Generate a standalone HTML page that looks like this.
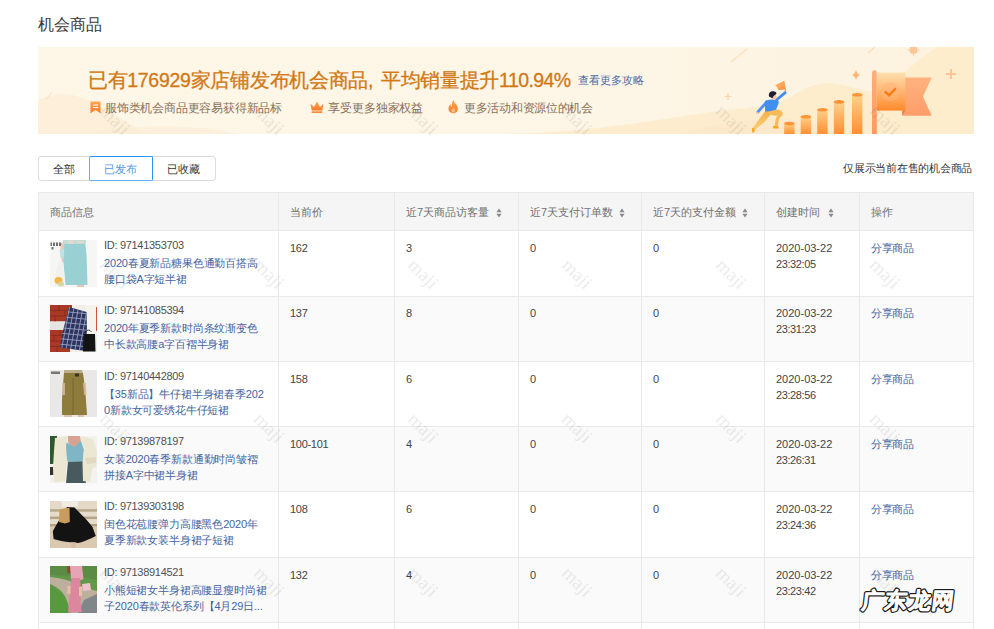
<!DOCTYPE html><html><head><meta charset="utf-8"><style>
*{margin:0;padding:0;box-sizing:border-box}
html,body{width:994px;height:629px;overflow:hidden;background:#fff;font-family:"Liberation Sans",sans-serif;color:#333}
.t{position:absolute;white-space:nowrap}
.r{position:absolute}
</style></head><body>
<div class="t" style="left:37.5px;top:14px;font-size:16px;line-height:22px;color:#383838;letter-spacing:0.3px">机会商品</div>
<svg class="r" style="left:38px;top:47px" width="936" height="87" viewBox="0 0 936 87"><defs><linearGradient id="bg" x1="0" y1="0" x2="1" y2="0"><stop offset="0" stop-color="#fef6e6"/><stop offset="0.6" stop-color="#fdf5e6"/><stop offset="1" stop-color="#fdf2df"/></linearGradient><linearGradient id="bar" x1="0" y1="0" x2="0" y2="1"><stop offset="0" stop-color="#ffd08a"/><stop offset="1" stop-color="#ff8f33"/></linearGradient><linearGradient id="flag" x1="0" y1="0" x2="0" y2="1"><stop offset="0" stop-color="#fee0b0"/><stop offset="0.55" stop-color="#ffb169"/><stop offset="1" stop-color="#ff8a2c"/></linearGradient><linearGradient id="tail" x1="0" y1="0" x2="0" y2="1"><stop offset="0" stop-color="#ffb27e"/><stop offset="1" stop-color="#ff9e6a"/></linearGradient><linearGradient id="pole" x1="0" y1="0" x2="0" y2="1"><stop offset="0" stop-color="#ffae7a"/><stop offset="1" stop-color="#ff9a5e"/></linearGradient><linearGradient id="legs" x1="0" y1="0" x2="0" y2="1"><stop offset="0" stop-color="#f6ad45"/><stop offset="1" stop-color="#fbd07c"/></linearGradient><linearGradient id="pf" x1="0" y1="0" x2="1" y2="1"><stop offset="0" stop-color="#ffc27a"/><stop offset="1" stop-color="#ff8a3a"/></linearGradient></defs><rect width="936" height="87" fill="url(#bg)"/><path d="M0 53 C10 49 22 46 34 48 C60 54 80 72 110 87 L0 87Z" fill="#fcebd0" opacity="0.6"/><path d="M40 87 C90 78 150 76 200 87Z" fill="#fbebd3" opacity="0.5"/><path d="M470 87 C580 84 650 66 700 62 C728 59 745 55 758 47 C770 40 779 36 789 36 C806 36 822 45 840 45 C856 40 872 16 900 0 L936 0 L936 87Z" fill="#fdeccb" opacity="0.9"/><path d="M640 87 C670 78 700 74 730 72 C760 70 790 80 800 87Z" fill="#fbe6c8" opacity="0.5"/><path d="M693 15 L709 2" stroke="#fbe2c0" stroke-width="1.5"/><path d="M830 6 L837 0" stroke="#f8d2a8" stroke-width="1"/><path d="M8 53 L14 45" stroke="#fbe0c0" stroke-width="1"/><path d="M818 23 Q819 27 822 28 Q819 29 818 33 Q817 29 814 28 Q817 27 818 23Z" fill="#fbb77a"/><path d="M913 22 V32 M908 27 H918" stroke="#fcc497" stroke-width="2"/><path d="M690 46 V53 M686.5 49.5 H693.5" stroke="#fcd3ab" stroke-width="1.2"/><circle cx="875.5" cy="3" r="4" fill="#fdc696"/><path d="M875.5 -3 V9 M869.5 3 H881.5" stroke="#fdc696" stroke-width="0.8"/><rect x="746.2" y="76.6" width="10.4" height="10.400000000000006" fill="url(#bar)"/><ellipse cx="751.4000000000001" cy="76.6" rx="5.2" ry="1.8" fill="#ff9536"/><rect x="762.7" y="69.8" width="10.4" height="17.200000000000003" fill="url(#bar)"/><ellipse cx="767.9000000000001" cy="69.8" rx="5.2" ry="1.8" fill="#ff9536"/><rect x="779.2" y="62.7" width="10.4" height="24.299999999999997" fill="url(#bar)"/><ellipse cx="784.4000000000001" cy="62.7" rx="5.2" ry="1.8" fill="#ff9536"/><rect x="795.8" y="54.9" width="10.4" height="32.1" fill="url(#bar)"/><ellipse cx="801.0" cy="54.9" rx="5.2" ry="1.8" fill="#ff9536"/><rect x="814" y="47.8" width="10.4" height="39.2" fill="url(#bar)"/><ellipse cx="819.2" cy="47.8" rx="5.2" ry="1.8" fill="#ff9536"/><path d="M834 25.7 A2.4 2.4 0 0 1 838.8 25.7 V87 H834Z" fill="url(#pole)"/><path d="M864.4 30.4 H893.7 L885 49.5 L893.7 68.7 H864.4Z" fill="url(#tail)"/><path d="M864.4 63.6 L867.4 63.6 L864.4 68.7Z" fill="#f07a30"/><rect x="838.8" y="25.5" width="28.6" height="38.1" fill="url(#flag)"/><circle cx="852" cy="44.6" r="9.3" fill="#ffb57a" opacity="0.55"/><path d="M846.8 44.3 L851 48.3 L857.8 41.2" stroke="#ff7a0a" stroke-width="2.3" fill="none"/><path d="M728 63 L736.5 63 L726.5 75 L716.8 83 L714.3 81.5 L721 72.5Z" fill="url(#legs)"/><path d="M730.5 62.3 L738 62.3 C741.5 63 744.5 64 744.8 66.2 C744.8 68 743 70 741.2 71.5 L739.6 79.5 L736.4 79.5 L737.9 71 L739.3 68.6 C736 68.8 733 68.3 730.5 67.2Z" fill="#f8bb5a"/><path d="M735.2 79 L740 79 L741 81.6 L735.2 81.6Z" fill="#f6a524"/><path d="M714 80.8 L716.9 81.8 L716.2 85.6 L714.2 85.6Z" fill="#f6a524"/><path d="M737.8 53.5 L747.2 45.6" stroke="#3f8ef0" stroke-width="2.8" stroke-linecap="round"/><path d="M728.6 55 L719.9 65" stroke="#4996f4" stroke-width="2.8" stroke-linecap="round"/><path d="M727.5 53.6 C730 52.6 735 52.2 738 52.5 C740.5 53 741.2 54.5 740.5 56.5 L738 62.8 C734.5 63.8 731 64.5 727.3 64.8 C726.8 61 726.8 57 727.5 53.6Z" fill="#3f8ef0"/><circle cx="719.4" cy="66" r="1.2" fill="#f8c6a8"/><circle cx="736" cy="50.2" r="2.6" fill="#f7c5ad"/><path d="M731 49.6 C730.3 46 732.3 44.1 735.3 44.3 C738.2 44.5 739.2 46.5 737.8 47.6 C736.4 48.3 735.3 48.8 734.4 51.3 Z" fill="#1e1e2e"/><path d="M747.7 45 L745.6 34" stroke="#f08030" stroke-width="0.9"/><path d="M737.3 38.3 C740 36.5 743 35.5 746.2 33.7 L747.2 42.3 C745 42.6 742.8 43 740.6 43.3 C740 41.5 738.8 39.8 737.3 38.3Z" fill="url(#pf)"/></svg>
<div class="t" style="left:87.8px;top:66px;font-size:19.5px;line-height:28px;color:#d27814;letter-spacing:-0.28px;-webkit-text-stroke:0.3px #d27814">已有176929家店铺发布机会商品<span style="margin-right:2.4px">, </span>平均销量提升<span style="letter-spacing:-0.6px">110.94%</span></div>
<div class="t" style="left:578px;top:72px;font-size:11px;line-height:16px;color:#4a6ca6;">查看更多攻略</div>
<div class="t" style="left:105px;top:100px;font-size:12px;line-height:16px;color:#8a7058;letter-spacing:-0.2px">服饰类机会商品更容易获得新品标</div>
<div class="t" style="left:328px;top:100px;font-size:12px;line-height:16px;color:#8a7058;letter-spacing:-0.1px">享受更多独家权益</div>
<div class="t" style="left:464px;top:100px;font-size:12px;line-height:16px;color:#8a7058;letter-spacing:-0.3px">更多活动和资源位的机会</div>
<svg class="r" style="left:89px;top:100px" width="13" height="14" viewBox="0 0 13 14"><defs><linearGradient id="ic" x1="0" y1="0" x2="0" y2="1"><stop offset="0" stop-color="#ffa552"/><stop offset="1" stop-color="#ff7a28"/></linearGradient></defs><path d="M1.5 1.5 H11.5 V13.2 L6.5 10 L1.5 13.2Z" fill="url(#ic)"/><path d="M4 5 H9 M4 7.5 H9" stroke="#fff" stroke-width="1.1"/></svg>
<svg class="r" style="left:309px;top:100px" width="16" height="14" viewBox="0 0 16 14"><path d="M1.5 3.5 L5 7 L8 1.5 L11 7 L14.5 3.5 L13.3 10.5 H2.7Z" fill="url(#ic)"/><rect x="2.7" y="11.3" width="10.6" height="1.7" fill="#ff8a36"/></svg>
<svg class="r" style="left:447px;top:99px" width="13" height="15" viewBox="0 0 13 15"><path d="M6.2 1 C7 4 10.5 5.5 10.8 9.2 C11 12.3 8.8 14.2 6.2 14.2 C3.3 14.2 1.3 12.2 1.5 9.3 C1.6 7.3 2.8 6 3.5 5.2 C3.6 6.8 4.2 7.5 4.9 7.8 C4.6 5 5.5 2.6 6.2 1Z" fill="url(#ic)"/><path d="M6.3 8.5 C7.3 9.8 8.3 10.6 8.2 12 C8.1 13 7.3 13.6 6.3 13.6 C5.2 13.6 4.4 12.9 4.5 11.8 C4.6 10.6 5.6 9.9 6.3 8.5Z" fill="#ffd08a" opacity="0.8"/></svg>
<div class="r" style="left:38px;top:156px;width:178px;height:25px;border:1px solid #dcdcdc;border-radius:3px;background:#fff"></div>
<div class="r" style="left:152px;top:157px;width:1px;height:23px;background:#dcdcdc"></div>
<div class="r" style="left:89px;top:156px;width:64px;height:25px;border:1px solid #2b92ee;border-left-color:#62b0f3;border-bottom-color:#62b0f3;border-radius:2px"></div>
<div class="t" style="left:53px;top:161px;font-size:11px;line-height:16px;color:#333;">全部</div>
<div class="t" style="left:104px;top:161px;font-size:11px;line-height:16px;color:#5593e6;">已发布</div>
<div class="t" style="left:167px;top:161px;font-size:11px;line-height:16px;color:#333;">已收藏</div>
<div class="t" style="left:843px;top:160px;font-size:11px;line-height:16px;color:#333;letter-spacing:-0.25px">仅展示当前在售的机会商品</div>
<div class="r" style="left:38px;top:192px;width:935px;height:38px;background:#f5f5f5"></div>
<div class="r" style="left:38px;top:296px;width:935px;height:65px;background:#fafafa"></div>
<div class="r" style="left:38px;top:426px;width:935px;height:65px;background:#fafafa"></div>
<div class="r" style="left:38px;top:557px;width:935px;height:65px;background:#fafafa"></div>
<div class="r" style="left:38px;top:622px;width:935px;height:10px;background:#fff"></div>
<div class="r" style="left:38px;top:192px;width:936px;height:1px;background:#e9e9e9"></div>
<div class="r" style="left:38px;top:230px;width:936px;height:1px;background:#e9e9e9"></div>
<div class="r" style="left:38px;top:296px;width:936px;height:1px;background:#e9e9e9"></div>
<div class="r" style="left:38px;top:361px;width:936px;height:1px;background:#e9e9e9"></div>
<div class="r" style="left:38px;top:426px;width:936px;height:1px;background:#e9e9e9"></div>
<div class="r" style="left:38px;top:491px;width:936px;height:1px;background:#e9e9e9"></div>
<div class="r" style="left:38px;top:557px;width:936px;height:1px;background:#e9e9e9"></div>
<div class="r" style="left:38px;top:622px;width:936px;height:1px;background:#e9e9e9"></div>
<div class="r" style="left:38px;top:192px;width:1px;height:437px;background:#e9e9e9"></div>
<div class="r" style="left:278px;top:192px;width:1px;height:437px;background:#e9e9e9"></div>
<div class="r" style="left:394px;top:192px;width:1px;height:437px;background:#e9e9e9"></div>
<div class="r" style="left:518px;top:192px;width:1px;height:437px;background:#e9e9e9"></div>
<div class="r" style="left:641px;top:192px;width:1px;height:437px;background:#e9e9e9"></div>
<div class="r" style="left:764px;top:192px;width:1px;height:437px;background:#e9e9e9"></div>
<div class="r" style="left:859px;top:192px;width:1px;height:437px;background:#e9e9e9"></div>
<div class="r" style="left:973px;top:192px;width:1px;height:437px;background:#e9e9e9"></div>
<div class="t" style="left:50px;top:204px;font-size:11px;line-height:16px;color:#707070;">商品信息</div>
<div class="t" style="left:290px;top:204px;font-size:11px;line-height:16px;color:#707070;">当前价</div>
<div class="t" style="left:406px;top:204px;font-size:11px;line-height:16px;color:#707070;">近7天商品访客量</div>
<svg class="r" style="left:496px;top:208px" width="6" height="10" viewBox="0 0 6 10"><path d="M3 0.5L5.6 4.3H0.4Z M3 9.5L5.6 5.7H0.4Z" fill="#8a8a8a"/></svg>
<div class="t" style="left:530px;top:204px;font-size:11px;line-height:16px;color:#707070;">近7天支付订单数</div>
<svg class="r" style="left:619px;top:208px" width="6" height="10" viewBox="0 0 6 10"><path d="M3 0.5L5.6 4.3H0.4Z M3 9.5L5.6 5.7H0.4Z" fill="#8a8a8a"/></svg>
<div class="t" style="left:653px;top:204px;font-size:11px;line-height:16px;color:#707070;">近7天的支付金额</div>
<svg class="r" style="left:742px;top:208px" width="6" height="10" viewBox="0 0 6 10"><path d="M3 0.5L5.6 4.3H0.4Z M3 9.5L5.6 5.7H0.4Z" fill="#8a8a8a"/></svg>
<div class="t" style="left:776px;top:204px;font-size:11px;line-height:16px;color:#707070;">创建时间</div>
<svg class="r" style="left:828px;top:208px" width="6" height="10" viewBox="0 0 6 10"><path d="M3 0.5L5.6 4.3H0.4Z M3 9.5L5.6 5.7H0.4Z" fill="#8a8a8a"/></svg>
<div class="t" style="left:871px;top:204px;font-size:11px;line-height:16px;color:#707070;">操作</div>
<svg class="r" style="left:50px;top:240px" width="47" height="47" viewBox="0 0 47 47"><rect width="47" height="47" fill="#f6f6f5"/>
<path d="M11 3 L14 2 L16 10 L15 22 L12 22 L10 12Z" fill="#e6c8bd"/>
<path d="M9.5 10 L14.5 9 L15 17 L10.5 18Z" fill="#bfe3e3"/>
<path d="M14 2 L35 1.5 L36.5 14 L37.5 45 L15.5 45 L13.5 23 L14.3 8Z" fill="#98d0d3"/>
<path d="M13 0 L36 0 L36 4 L13 4Z" fill="#c4ddd4"/>
<path d="M18 1 L23 0.5 L24 3.5 L18 3.5Z M27 1 L33 1 L33 3 L27 3Z" fill="#e9d6cf"/>
<path d="M27 45 L34 45 L34 47 L27 47Z" fill="#e9c7b8"/>
<path d="M8 22 L13 22 L15 40 L12 46 L5 46 L5 38Z" fill="#efefec" opacity="0.9"/>
<ellipse cx="8.5" cy="40.5" rx="4" ry="3.5" fill="#f2b74a"/>
<ellipse cx="11" cy="44" rx="3" ry="2.5" fill="#d8d4a0"/>
<path d="M0.5 2.5 H2 V6 H0.5Z M3 2.5 H5 V6 H3Z M6 2.5 H8 V6 H6Z M9 2.5 H11 V6 H9Z M1.5 7 H3.5 V9.5 H1.5Z" fill="#444" opacity="0.75"/></svg>
<div class="t" style="left:104px;top:237px;font-size:11px;line-height:16px;color:#505050;letter-spacing:-0.3px">ID: 97141353703</div>
<div class="t" style="left:104px;top:255px;font-size:11px;line-height:16px;color:#4464a0;letter-spacing:-0.17px">2020春夏新品糖果色通勤百搭高</div>
<div class="t" style="left:104px;top:271px;font-size:11px;line-height:16px;color:#4464a0;letter-spacing:-0.17px">腰口袋A字短半裙</div>
<div class="t" style="left:290px;top:240px;font-size:11px;line-height:16px;color:#444;letter-spacing:-0.3px">162</div>
<div class="t" style="left:406px;top:240px;font-size:11px;line-height:16px;color:#444;letter-spacing:-0.3px">3</div>
<div class="t" style="left:530px;top:240px;font-size:11px;line-height:16px;color:#444;letter-spacing:-0.3px">0</div>
<div class="t" style="left:653px;top:240px;font-size:11px;line-height:16px;color:#444;letter-spacing:-0.3px">0</div>
<div class="t" style="left:776px;top:240px;font-size:11px;line-height:16px;color:#444;">2020-03-22</div>
<div class="t" style="left:776px;top:256px;font-size:11px;line-height:16px;color:#444;letter-spacing:-0.4px">23:32:05</div>
<div class="t" style="left:871px;top:240px;font-size:11px;line-height:16px;color:#4464a0;letter-spacing:-0.3px">分享商品</div>
<svg class="r" style="left:50px;top:305px" width="47" height="47" viewBox="0 0 47 47"><rect width="47" height="47" fill="#f2efea"/>
<rect x="0" y="0" width="22" height="16.5" fill="#a83a24"/>
<rect x="0" y="25" width="20" height="22" fill="#a83a24"/>
<rect x="0" y="16.5" width="20" height="8.5" fill="#e8e6e3"/>
<path d="M0 5.5 H22 M0 11 H22 M0 30.5 H20 M0 36 H20 M0 41.5 H20 M9 0 V5.5 M15 5.5 V11 M5 11 V16.5 M10 25 V30.5 M4 30.5 V36 M13 36 V41.5 M7 41.5 V47" stroke="#7c2a1c" stroke-width="0.9" opacity="0.8"/>
<path d="M45.5 2 L47 2 L47 26 L45.5 26Z" fill="#c9553a"/>
<path d="M36 0 L46 0 L46 28 L38 29 L35 20Z" fill="#f6f2ec"/>
<clipPath id="sk2"><path d="M19 2 L36.5 7 L37 26 L35.5 46 L10 42.5 L11.5 32Z"/></clipPath>
<path d="M19 2 L36.5 7 L37 26 L35.5 46 L10 42.5 L11.5 32Z" fill="#2b3560"/>
<g clip-path="url(#sk2)"><path d="M8 6.0 L40 9.0 M8 11.5 L40 14.5 M8 17.0 L40 20.0 M8 22.5 L40 25.5 M8 28.0 L40 31.0 M8 33.5 L40 36.5 M8 39.0 L40 42.0 M8 44.5 L40 47.5 M20.0 0 L11.0 47 M24.5 0 L15.5 47 M29.0 0 L20.0 47 M33.5 0 L24.5 47 M38.0 0 L29.0 47 M42.5 0 L33.5 47 M47.0 0 L38.0 47" stroke="#9aa2c2" stroke-width="0.9"/></g>
<path d="M35.5 27 Q38.5 23 41.5 27" stroke="#222" stroke-width="0.8" fill="none"/>
<path d="M33.5 29 L45 29 L45.5 46.5 L33 46.5Z" fill="#131313"/></svg>
<div class="t" style="left:104px;top:302px;font-size:11px;line-height:16px;color:#505050;letter-spacing:-0.3px">ID: 97141085394</div>
<div class="t" style="left:104px;top:320px;font-size:11px;line-height:16px;color:#4464a0;letter-spacing:-0.17px">2020年夏季新款时尚条纹渐变色</div>
<div class="t" style="left:104px;top:336px;font-size:11px;line-height:16px;color:#4464a0;letter-spacing:-0.17px">中长款高腰a字百褶半身裙</div>
<div class="t" style="left:290px;top:305px;font-size:11px;line-height:16px;color:#444;letter-spacing:-0.3px">137</div>
<div class="t" style="left:406px;top:305px;font-size:11px;line-height:16px;color:#444;letter-spacing:-0.3px">8</div>
<div class="t" style="left:530px;top:305px;font-size:11px;line-height:16px;color:#444;letter-spacing:-0.3px">0</div>
<div class="t" style="left:653px;top:305px;font-size:11px;line-height:16px;color:#444;letter-spacing:-0.3px">0</div>
<div class="t" style="left:776px;top:305px;font-size:11px;line-height:16px;color:#444;">2020-03-22</div>
<div class="t" style="left:776px;top:321px;font-size:11px;line-height:16px;color:#444;letter-spacing:-0.4px">23:31:23</div>
<div class="t" style="left:871px;top:305px;font-size:11px;line-height:16px;color:#4464a0;letter-spacing:-0.3px">分享商品</div>
<svg class="r" style="left:50px;top:370px" width="47" height="47" viewBox="0 0 47 47"><rect width="47" height="47" fill="#eae8e6"/>
<path d="M14 0 L32 0 L33 4 L14 4Z" fill="#bfae8a"/>
<path d="M14 3 L33 3 L35 18 L36 30 L37 45 L12 45 L12 30 L13 15Z" fill="#8e7c3c"/>
<path d="M12 13 L15 13 L15 25 L12.5 25Z M33 13 L36 13 L36.5 25 L34 25Z" fill="#d8b8a0" opacity="0.85"/>
<path d="M23 8 L23 45" stroke="#6f602c" stroke-width="0.8"/>
<rect x="25" y="3.5" width="4" height="3" fill="#3a3420"/>
<path d="M14 45 L22 45 L22 47 L14 47Z M28 45 L34 45 L34 47 L28 47Z" fill="#dcc3b0"/>
<path d="M1 1.5 H10 V4 H1Z" fill="#444" opacity="0.7"/></svg>
<div class="t" style="left:104px;top:368px;font-size:11px;line-height:16px;color:#505050;letter-spacing:-0.3px">ID: 97140442809</div>
<div class="t" style="left:104px;top:386px;font-size:11px;line-height:16px;color:#4464a0;letter-spacing:-0.17px">【35新品】牛仔裙半身裙春季202</div>
<div class="t" style="left:104px;top:402px;font-size:11px;line-height:16px;color:#4464a0;letter-spacing:-0.17px">0新款女可爱绣花牛仔短裙</div>
<div class="t" style="left:290px;top:371px;font-size:11px;line-height:16px;color:#444;letter-spacing:-0.3px">158</div>
<div class="t" style="left:406px;top:371px;font-size:11px;line-height:16px;color:#444;letter-spacing:-0.3px">6</div>
<div class="t" style="left:530px;top:371px;font-size:11px;line-height:16px;color:#444;letter-spacing:-0.3px">0</div>
<div class="t" style="left:653px;top:371px;font-size:11px;line-height:16px;color:#444;letter-spacing:-0.3px">0</div>
<div class="t" style="left:776px;top:371px;font-size:11px;line-height:16px;color:#444;">2020-03-22</div>
<div class="t" style="left:776px;top:387px;font-size:11px;line-height:16px;color:#444;letter-spacing:-0.4px">23:28:56</div>
<div class="t" style="left:871px;top:371px;font-size:11px;line-height:16px;color:#4464a0;letter-spacing:-0.3px">分享商品</div>
<svg class="r" style="left:50px;top:436px" width="47" height="47" viewBox="0 0 47 47"><rect width="47" height="47" fill="#f3f2ee"/>
<path d="M0 0 L7 0 L7.5 14 L6 26 L3 28 L0 28Z" fill="#2c5a2c"/>
<path d="M0 31 L3.5 31 L3.5 39 L0 39Z" fill="#333"/>
<path d="M18 0 L30 0 L31 6 L28 11 L21 11 L18 6Z" fill="#d8a392"/>
<path d="M16 6 L24 11 L31 5 L34 14 L33 26 L18 27 L15 16Z" fill="#7fb6c6"/>
<path d="M18 26 L33 25.5 L36 47 L16 47Z" fill="#485a5e"/>
<path d="M5 2 L18 0 L16 10 L17 26 L15 45 L4 46.5 L3 32 L4 15Z" fill="#ece7d3"/>
<path d="M30 0 L43 3 L47 15 L46.5 30 L42 33 L40 46 L33 45 L32.5 27 L34 12Z" fill="#ece7d3"/>
<path d="M35 22 L46 21 L46 27 L37 28Z" fill="#e0d9c2"/></svg>
<div class="t" style="left:104px;top:433px;font-size:11px;line-height:16px;color:#505050;letter-spacing:-0.3px">ID: 97139878197</div>
<div class="t" style="left:104px;top:451px;font-size:11px;line-height:16px;color:#4464a0;letter-spacing:-0.17px">女装2020春季新款通勤时尚皱褶</div>
<div class="t" style="left:104px;top:467px;font-size:11px;line-height:16px;color:#4464a0;letter-spacing:-0.17px">拼接A字中裙半身裙</div>
<div class="t" style="left:290px;top:436px;font-size:11px;line-height:16px;color:#444;letter-spacing:-0.3px">100-101</div>
<div class="t" style="left:406px;top:436px;font-size:11px;line-height:16px;color:#444;letter-spacing:-0.3px">4</div>
<div class="t" style="left:530px;top:436px;font-size:11px;line-height:16px;color:#444;letter-spacing:-0.3px">0</div>
<div class="t" style="left:653px;top:436px;font-size:11px;line-height:16px;color:#444;letter-spacing:-0.3px">0</div>
<div class="t" style="left:776px;top:436px;font-size:11px;line-height:16px;color:#444;">2020-03-22</div>
<div class="t" style="left:776px;top:452px;font-size:11px;line-height:16px;color:#444;letter-spacing:-0.4px">23:26:31</div>
<div class="t" style="left:871px;top:436px;font-size:11px;line-height:16px;color:#4464a0;letter-spacing:-0.3px">分享商品</div>
<svg class="r" style="left:50px;top:501px" width="47" height="47" viewBox="0 0 47 47"><rect width="47" height="47" fill="#dccdb5"/>
<rect x="0" y="0" width="47" height="8.5" fill="#e4d9c6"/>
<rect x="0" y="8.2" width="47" height="2.6" fill="#b9a88c"/>
<rect x="0" y="10.8" width="47" height="5" fill="#e6dccb"/>
<rect x="0" y="15.6" width="47" height="2.6" fill="#b5a386"/>
<rect x="0" y="18.2" width="47" height="5" fill="#e6dccb"/>
<rect x="0" y="23" width="47" height="2.6" fill="#b3a084"/>
<rect x="0" y="25.6" width="47" height="21.4" fill="#dac9af"/>
<path d="M11.5 0 L28 0 L28 5.6 L12 6Z" fill="#f0ebe4"/>
<path d="M17 6 L24.5 6.5 C30 12 38 20 42.5 26 L45.8 35 C40 38 33 41 28.2 42 L20.3 41.3 C14 40.5 8 39.5 3.6 38 L2.8 30.2 C6 24 11 16 17 6Z" fill="#131313"/>
<path d="M9.5 8.5 L19.5 6.5 L19.8 21 L15 22.5 L9 21Z" fill="#c99c5c"/>
<path d="M21 41.3 L26 41.3 L25.5 47 L21.5 47Z" fill="#d9b9a4"/></svg>
<div class="t" style="left:104px;top:498px;font-size:11px;line-height:16px;color:#505050;letter-spacing:-0.3px">ID: 97139303198</div>
<div class="t" style="left:104px;top:516px;font-size:11px;line-height:16px;color:#4464a0;letter-spacing:-0.17px">闺色花苞腰弹力高腰黑色2020年</div>
<div class="t" style="left:104px;top:532px;font-size:11px;line-height:16px;color:#4464a0;letter-spacing:-0.17px">夏季新款女装半身裙子短裙</div>
<div class="t" style="left:290px;top:501px;font-size:11px;line-height:16px;color:#444;letter-spacing:-0.3px">108</div>
<div class="t" style="left:406px;top:501px;font-size:11px;line-height:16px;color:#444;letter-spacing:-0.3px">6</div>
<div class="t" style="left:530px;top:501px;font-size:11px;line-height:16px;color:#444;letter-spacing:-0.3px">0</div>
<div class="t" style="left:653px;top:501px;font-size:11px;line-height:16px;color:#444;letter-spacing:-0.3px">0</div>
<div class="t" style="left:776px;top:501px;font-size:11px;line-height:16px;color:#444;">2020-03-22</div>
<div class="t" style="left:776px;top:517px;font-size:11px;line-height:16px;color:#444;letter-spacing:-0.4px">23:24:36</div>
<div class="t" style="left:871px;top:501px;font-size:11px;line-height:16px;color:#4464a0;letter-spacing:-0.3px">分享商品</div>
<svg class="r" style="left:50px;top:566px" width="47" height="47" viewBox="0 0 47 47"><rect width="47" height="47" fill="#62984a"/>
<path d="M0 0 H47 V14 L36 12 L24 10 L0 9Z" fill="#5a8c44"/>
<path d="M0 11 C10 12 20 14 28 19 C36 22 42 24 47 25 L47 34 C42 38 36 42 30 47 L20 47 C19 38 16 30 10 24 C6 21 3 19 0 18Z" fill="#bcb09c"/>
<path d="M34 34 L47 28 L47 47 L28 47Z" fill="#80868a"/>
<path d="M0 19 C5 22 11 26 15 31 C17 36 18 42 18 47 L0 47Z" fill="#579a3e"/>
<path d="M17 0.5 L21 0 L21.5 7 L17.5 7.5Z" fill="#8c4a32"/>
<path d="M20 0 L32 0 L33.5 13 L28 15 L21 13Z" fill="#e6a4b6"/>
<path d="M21.5 12 L30 12 L31 24 L30.5 36 L32 46 L18 46.5 L19 36 L20 24Z" fill="#dc879e"/>
<path d="M32 18 L40 17 L41 24 L33 25Z" fill="#f0c2cf"/>
<path d="M17.5 20 L20.5 20 L20.5 28 L17.5 28Z M29 21 L32 21 L32 30 L29 30Z" fill="#e8bfa8"/></svg>
<div class="t" style="left:104px;top:564px;font-size:11px;line-height:16px;color:#505050;letter-spacing:-0.3px">ID: 97138914521</div>
<div class="t" style="left:104px;top:582px;font-size:11px;line-height:16px;color:#4464a0;letter-spacing:-0.17px">小熊短裙女半身裙高腰显瘦时尚裙</div>
<div class="t" style="left:104px;top:598px;font-size:11px;line-height:16px;color:#4464a0;letter-spacing:-0.17px">子2020春款英伦系列【4月29日...</div>
<div class="t" style="left:290px;top:567px;font-size:11px;line-height:16px;color:#444;letter-spacing:-0.3px">132</div>
<div class="t" style="left:406px;top:567px;font-size:11px;line-height:16px;color:#444;letter-spacing:-0.3px">4</div>
<div class="t" style="left:530px;top:567px;font-size:11px;line-height:16px;color:#444;letter-spacing:-0.3px">0</div>
<div class="t" style="left:653px;top:567px;font-size:11px;line-height:16px;color:#444;letter-spacing:-0.3px">0</div>
<div class="t" style="left:776px;top:567px;font-size:11px;line-height:16px;color:#444;">2020-03-22</div>
<div class="t" style="left:776px;top:583px;font-size:11px;line-height:16px;color:#444;letter-spacing:-0.4px">23:23:42</div>
<div class="t" style="left:871px;top:567px;font-size:11px;line-height:16px;color:#4464a0;letter-spacing:-0.3px">分享商品</div>
<div class="t" style="left:89.5px;top:108.5px;width:50px;height:22px;font-size:19px;line-height:22px;color:#000;opacity:0.07;transform:rotate(45deg);text-align:center;font-family:'Liberation Serif',serif">maji</div>
<div class="t" style="left:243.5px;top:108.5px;width:50px;height:22px;font-size:19px;line-height:22px;color:#000;opacity:0.07;transform:rotate(45deg);text-align:center;font-family:'Liberation Serif',serif">maji</div>
<div class="t" style="left:397.5px;top:108.5px;width:50px;height:22px;font-size:19px;line-height:22px;color:#000;opacity:0.07;transform:rotate(45deg);text-align:center;font-family:'Liberation Serif',serif">maji</div>
<div class="t" style="left:551.5px;top:108.5px;width:50px;height:22px;font-size:19px;line-height:22px;color:#000;opacity:0.07;transform:rotate(45deg);text-align:center;font-family:'Liberation Serif',serif">maji</div>
<div class="t" style="left:705.5px;top:108.5px;width:50px;height:22px;font-size:19px;line-height:22px;color:#000;opacity:0.07;transform:rotate(45deg);text-align:center;font-family:'Liberation Serif',serif">maji</div>
<div class="t" style="left:859.5px;top:108.5px;width:50px;height:22px;font-size:19px;line-height:22px;color:#000;opacity:0.07;transform:rotate(45deg);text-align:center;font-family:'Liberation Serif',serif">maji</div>
<div class="t" style="left:89.5px;top:262.5px;width:50px;height:22px;font-size:19px;line-height:22px;color:#000;opacity:0.07;transform:rotate(45deg);text-align:center;font-family:'Liberation Serif',serif">maji</div>
<div class="t" style="left:243.5px;top:262.5px;width:50px;height:22px;font-size:19px;line-height:22px;color:#000;opacity:0.07;transform:rotate(45deg);text-align:center;font-family:'Liberation Serif',serif">maji</div>
<div class="t" style="left:397.5px;top:262.5px;width:50px;height:22px;font-size:19px;line-height:22px;color:#000;opacity:0.07;transform:rotate(45deg);text-align:center;font-family:'Liberation Serif',serif">maji</div>
<div class="t" style="left:551.5px;top:262.5px;width:50px;height:22px;font-size:19px;line-height:22px;color:#000;opacity:0.07;transform:rotate(45deg);text-align:center;font-family:'Liberation Serif',serif">maji</div>
<div class="t" style="left:705.5px;top:262.5px;width:50px;height:22px;font-size:19px;line-height:22px;color:#000;opacity:0.07;transform:rotate(45deg);text-align:center;font-family:'Liberation Serif',serif">maji</div>
<div class="t" style="left:859.5px;top:262.5px;width:50px;height:22px;font-size:19px;line-height:22px;color:#000;opacity:0.07;transform:rotate(45deg);text-align:center;font-family:'Liberation Serif',serif">maji</div>
<div class="t" style="left:89.5px;top:416.5px;width:50px;height:22px;font-size:19px;line-height:22px;color:#000;opacity:0.07;transform:rotate(45deg);text-align:center;font-family:'Liberation Serif',serif">maji</div>
<div class="t" style="left:243.5px;top:416.5px;width:50px;height:22px;font-size:19px;line-height:22px;color:#000;opacity:0.07;transform:rotate(45deg);text-align:center;font-family:'Liberation Serif',serif">maji</div>
<div class="t" style="left:397.5px;top:416.5px;width:50px;height:22px;font-size:19px;line-height:22px;color:#000;opacity:0.07;transform:rotate(45deg);text-align:center;font-family:'Liberation Serif',serif">maji</div>
<div class="t" style="left:551.5px;top:416.5px;width:50px;height:22px;font-size:19px;line-height:22px;color:#000;opacity:0.07;transform:rotate(45deg);text-align:center;font-family:'Liberation Serif',serif">maji</div>
<div class="t" style="left:705.5px;top:416.5px;width:50px;height:22px;font-size:19px;line-height:22px;color:#000;opacity:0.07;transform:rotate(45deg);text-align:center;font-family:'Liberation Serif',serif">maji</div>
<div class="t" style="left:859.5px;top:416.5px;width:50px;height:22px;font-size:19px;line-height:22px;color:#000;opacity:0.07;transform:rotate(45deg);text-align:center;font-family:'Liberation Serif',serif">maji</div>
<div class="t" style="left:89.5px;top:570.5px;width:50px;height:22px;font-size:19px;line-height:22px;color:#000;opacity:0.07;transform:rotate(45deg);text-align:center;font-family:'Liberation Serif',serif">maji</div>
<div class="t" style="left:243.5px;top:570.5px;width:50px;height:22px;font-size:19px;line-height:22px;color:#000;opacity:0.07;transform:rotate(45deg);text-align:center;font-family:'Liberation Serif',serif">maji</div>
<div class="t" style="left:397.5px;top:570.5px;width:50px;height:22px;font-size:19px;line-height:22px;color:#000;opacity:0.07;transform:rotate(45deg);text-align:center;font-family:'Liberation Serif',serif">maji</div>
<div class="t" style="left:551.5px;top:570.5px;width:50px;height:22px;font-size:19px;line-height:22px;color:#000;opacity:0.07;transform:rotate(45deg);text-align:center;font-family:'Liberation Serif',serif">maji</div>
<div class="t" style="left:705.5px;top:570.5px;width:50px;height:22px;font-size:19px;line-height:22px;color:#000;opacity:0.07;transform:rotate(45deg);text-align:center;font-family:'Liberation Serif',serif">maji</div>
<div class="t" style="left:859.5px;top:570.5px;width:50px;height:22px;font-size:19px;line-height:22px;color:#000;opacity:0.07;transform:rotate(45deg);text-align:center;font-family:'Liberation Serif',serif">maji</div>
<svg class="r" style="left:850px;top:578px" width="124" height="44" viewBox="0 0 124 44"><g transform="translate(11,30) skewX(-7)" font-size="22" font-weight="500" letter-spacing="1.4" font-family="Liberation Sans, sans-serif"><text x="0" y="0" fill="#1a1a1a" stroke="#1a1a1a" stroke-width="4.2" stroke-linejoin="round">广东龙网</text><text x="0" y="0" fill="#fff" stroke="#fff" stroke-width="1.7" stroke-linejoin="round">广东龙网</text></g></svg>
</body></html>
